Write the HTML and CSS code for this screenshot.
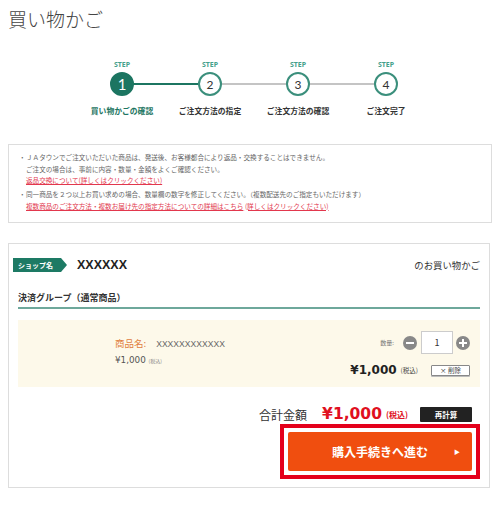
FILE: index.html
```html
<!DOCTYPE html>
<html lang="ja">
<head>
    <meta charset="UTF-8">
    <meta name="viewport" content="width=device-width, initial-scale=1.0">
    <title>買い物かご</title>
    <link rel="stylesheet" href="styles.css">
</head>
<body>
    <h1 class="page-title">買い物かご</h1>

    <ol class="steps">
        <li class="step is-current is-done">
            <span class="step-no">STEP</span>
            <span class="step-circle">1</span>
            <span class="step-name">買い物かごの確認</span>
        </li>
        <li class="step">
            <span class="step-no">STEP</span>
            <span class="step-circle">2</span>
            <span class="step-name">ご注文方法の指定</span>
        </li>
        <li class="step">
            <span class="step-no">STEP</span>
            <span class="step-circle">3</span>
            <span class="step-name">ご注文方法の確認</span>
        </li>
        <li class="step">
            <span class="step-no">STEP</span>
            <span class="step-circle">4</span>
            <span class="step-name">ご注文完了</span>
        </li>
    </ol>

    <div class="notice">
        <ul>
            <li>
                ＪＡタウンでご注文いただいた商品は、発送後、お客様都合により返品・交換することはできません。<br>
                ご注文の場合は、事前に内容・数量・金額をよくご確認ください。<br>
                <a href="#">返品交換について(詳しくはクリックください)</a>
            </li>
            <li>
                同一商品を２つ以上お買い求めの場合、数量欄の数字を修正してください。（複数配送先のご指定もいただけます）<br>
                <a href="#">複数商品のご注文方法・複数お届け先の指定方法についての詳細はこちら</a> <a href="#">(詳しくはクリックください)</a>
            </li>
        </ul>
    </div>

    <div class="cart">
        <div class="shop-head">
            <span class="shop-badge">ショップ名</span>
            <span class="shop-name">XXXXXX</span>
            <span class="shop-suffix">のお買い物かご</span>
        </div>

        <h2 class="group-title">決済グループ（通常商品）</h2>

        <div class="item">
            <div class="item-info">
                <p class="item-name"><span class="item-label">商品名:</span>XXXXXXXXXXXX</p>
                <p class="item-price">¥1,000 <small>(税込)</small></p>
            </div>
            <div class="item-ctrl">
                <div class="qty">
                    <span class="qty-label">数量:</span>
                    <button class="qty-btn minus" aria-label="減らす"></button>
                    <input class="qty-input" type="text" value="1">
                    <button class="qty-btn plus" aria-label="増やす"></button>
                </div>
                <div class="item-sub">
                    <span class="sub-price">¥1,000</span>
                    <small>(税込)</small>
                    <button class="del-btn">× 削除</button>
                </div>
            </div>
        </div>

        <div class="total">
            <span class="total-label">合計金額</span>
            <span class="total-price">¥1,000</span>
            <small class="total-tax">(税込)</small>
            <button class="recalc-btn">再計算</button>
        </div>

        <div class="checkout">
            <div class="checkout-frame">
                <button class="checkout-btn">購入手続きへ進む<span class="checkout-arrow">▶</span></button>
            </div>
        </div>
    </div>
</body>
</html>
```

FILE: styles.css
```css
* {
    margin: 0;
    padding: 0;
    box-sizing: border-box;
}

body {
    padding: 0 8px;
    background-color: #fff;
    color: #333;
    font-family: "Noto Sans CJK JP", "Noto Sans", sans-serif;
}

button, input {
    font-family: inherit;
}

/* 見出し */
.page-title {
    margin-top: 5px;
    font-size: 19px;
    line-height: 28px;
    font-weight: 300;
    color: #444;
}

/* ステップ */
.steps {
    list-style: none;
    display: flex;
    width: 352px;
    margin: 27px 0 0 70px;
}

.step {
    position: relative;
    width: 88px;
    display: flex;
    flex-direction: column;
    align-items: center;
}

.step:not(:last-child)::after {
    content: "";
    position: absolute;
    top: 23px;
    left: 50%;
    width: 100%;
    height: 2px;
    background-color: #c4c4c4;
}

.step.is-done::after {
    background-color: #1c7561;
}

.step-no {
    font-family: "Noto Sans", sans-serif;
    font-size: 7px;
    line-height: 10px;
    font-weight: bold;
    color: #45a08b;
}

.step-circle {
    position: relative;
    z-index: 1;
    width: 24px;
    height: 24px;
    margin-top: 2px;
    border: 2px solid #3b8f7c;
    border-radius: 50%;
    background-color: #fff;
    display: flex;
    align-items: center;
    justify-content: center;
    font-family: "Lato", sans-serif;
    font-size: 12px;
    color: #333;
}

.step.is-current .step-circle {
    background-color: #1c7561;
    border-color: #1c7561;
    color: #fff;
    font-size: 15px;
}

.step-name {
    margin-top: 10px;
    font-size: 7.8px;
    line-height: 10px;
    font-weight: bold;
    color: #333;
    white-space: nowrap;
}

.step.is-current .step-name {
    color: #1c7561;
}

/* 注意書き */
.notice {
    margin-top: 28px;
    border: 1px solid #ddd;
    padding: 7px 12px 10px;
    font-size: 6.6px;
    line-height: 11.5px;
    color: #666;
}

.notice ul {
    list-style: none;
}

.notice li {
    position: relative;
    padding-left: 5px;
}

.notice li + li {
    margin-top: 2.5px;
}

.notice li::before {
    content: "・";
    position: absolute;
    left: -2px;
}

.notice a {
    color: #e2374d;
}

/* カート */
.cart {
    margin-top: 20px;
    width: 482px;
    border: 1px solid #ddd;
    padding: 14px 9px 8px;
}

.shop-head {
    display: flex;
    align-items: center;
    height: 14px;
    margin-left: -5px;
}

.shop-badge {
    width: 54px;
    height: 14px;
    padding-left: 5px;
    background-color: #1d7a64;
    clip-path: polygon(0 0, 48px 0, 54px 50%, 48px 100%, 0 100%);
    color: #fff;
    font-size: 7px;
    line-height: 14px;
    font-weight: bold;
}

.shop-name {
    margin-left: 10px;
    font-family: "Liberation Sans", sans-serif;
    font-size: 12.5px;
    font-weight: bold;
    color: #222;
}

.shop-suffix {
    margin-left: auto;
    font-size: 9.4px;
    color: #333;
}

.group-title {
    margin-top: 20px;
    padding-bottom: 3px;
    border-bottom: 2px solid #6ea89b;
    font-size: 9px;
    line-height: 12px;
    font-weight: bold;
    color: #333;
}

.item {
    margin-top: 11px;
    height: 67px;
    display: flex;
    justify-content: space-between;
    padding: 11px 10px 9px 97px;
    background-color: #fdf9ea;
}

.item-info {
    padding-top: 5px;
}

.item-name {
    font-family: "Liberation Sans", sans-serif;
    font-size: 8.6px;
    line-height: 14px;
    color: #666;
}

.item-label {
    margin-right: 10px;
    font-family: "Noto Sans CJK JP", sans-serif;
    font-size: 9.5px;
    color: #e08040;
}

.item-price {
    margin-top: 3px;
    font-family: "DejaVu Sans", sans-serif;
    font-size: 8.8px;
    line-height: 12px;
    color: #555;
}

.item-price small {
    font-family: "Noto Sans CJK JP", sans-serif;
    font-size: 5px;
    color: #888;
}

.item-ctrl {
    display: flex;
    flex-direction: column;
    align-items: flex-end;
}

.qty {
    display: flex;
    align-items: center;
    height: 23px;
}

.qty-label {
    margin-right: 9px;
    font-size: 6px;
    color: #777;
}

.qty-btn {
    position: relative;
    width: 14px;
    height: 14px;
    border: none;
    border-radius: 50%;
    background-color: #888;
}

.qty-btn::before,
.plus::after {
    content: "";
    position: absolute;
    left: 3px;
    top: 6px;
    width: 8px;
    height: 2px;
    background-color: #fff;
}

.plus::after {
    transform: rotate(90deg);
}

.qty-input {
    width: 32px;
    height: 23px;
    margin: 0 3px 0 4px;
    border: 1px solid #ccc;
    background-color: #fff;
    text-align: center;
    font-size: 9px;
    color: #333;
}

.item-sub {
    display: flex;
    align-items: center;
    margin-top: 8px;
    height: 16px;
}

.sub-price {
    font-family: "DejaVu Sans", sans-serif;
    font-size: 12px;
    font-weight: bold;
    color: #222;
}

.item-sub small {
    margin-left: 4px;
    font-size: 6.5px;
    color: #444;
}

.del-btn {
    width: 39px;
    height: 11px;
    margin-left: 13px;
    border: 1px solid #888;
    border-radius: 1px;
    background-color: #fff;
    box-shadow: 0 1px 0 #bbb;
    font-size: 6.5px;
    line-height: 9px;
    color: #444;
}

/* 合計 */
.total {
    display: flex;
    align-items: center;
    justify-content: flex-end;
    height: 18px;
    margin-top: 18px;
    padding-right: 8px;
}

.total-label {
    font-size: 12px;
    color: #333;
}

.total-price {
    margin-left: 15px;
    font-family: "DejaVu Sans", sans-serif;
    font-size: 15.5px;
    font-weight: bold;
    color: #e0101e;
}

.total-tax {
    margin-left: 4px;
    font-size: 8px;
    font-weight: bold;
    color: #e0101e;
}

.recalc-btn {
    width: 52px;
    height: 15px;
    margin-left: 12px;
    border: none;
    border-radius: 1px;
    background-color: #222;
    color: #fff;
    font-size: 7.5px;
    font-weight: bold;
}

.checkout {
    display: flex;
    justify-content: flex-end;
    margin-top: 1px;
    padding-right: 0;
}

/* 赤枠（注目表示） */
.checkout-frame {
    border: 4px solid #e4001b;
    padding: 4px;
}

.checkout-btn {
    position: relative;
    display: block;
    width: 184px;
    height: 39px;
    border: none;
    border-radius: 2px;
    background-color: #f04e0f;
    color: #fff;
    font-size: 12px;
    font-weight: bold;
}

.checkout-arrow {
    position: absolute;
    right: 12px;
    top: 15px;
    font-size: 6px;
}
```
